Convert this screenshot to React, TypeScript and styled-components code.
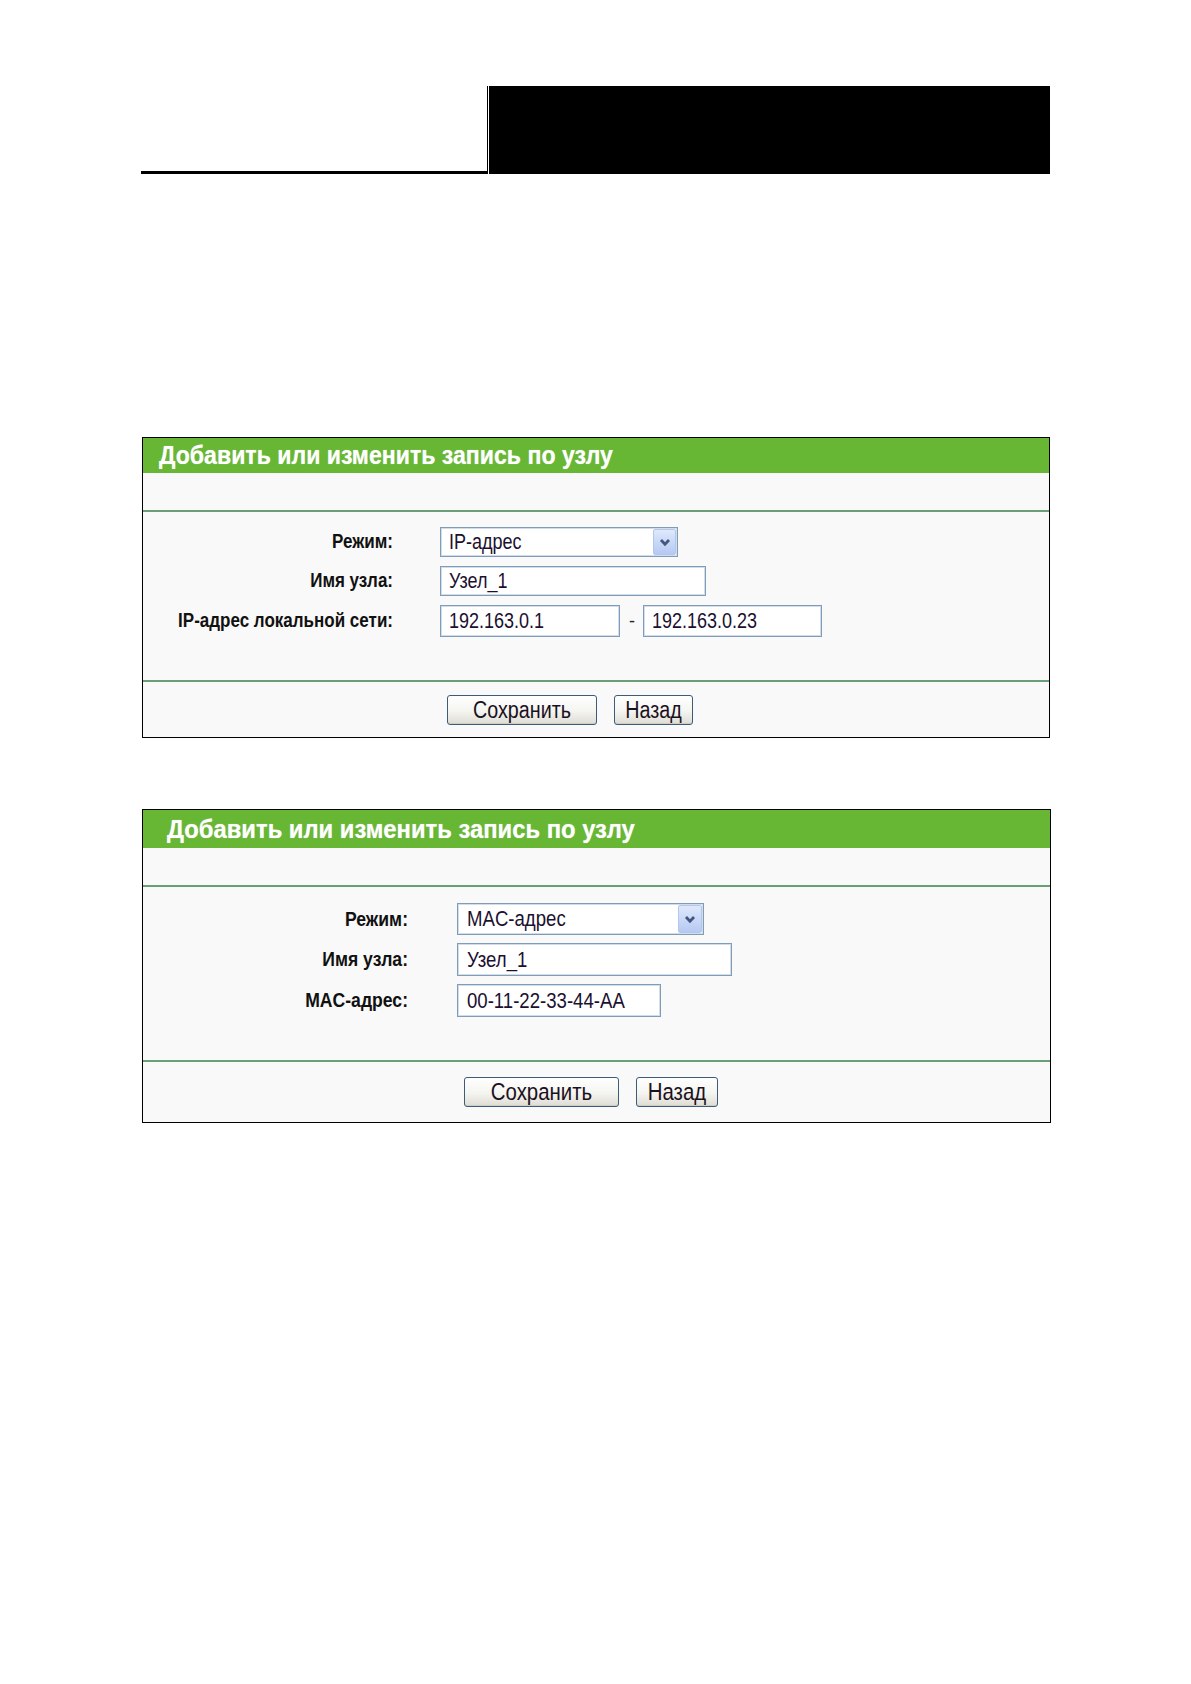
import React from "react";
import styled, { createGlobalStyle } from "styled-components";

const Global = createGlobalStyle`
  html, body { margin: 0; padding: 0; background: #ffffff; }
  body { font-family: "Liberation Sans", Arial, sans-serif; color: #000; }
`;

const Page = styled.div`
  width: 1191px;
  min-height: 1684px;
  box-sizing: border-box;
  padding: 86px 0 0 141px;
  display: flex;
  flex-direction: column;
`;

const Banner = styled.div`
  display: flex;
  width: 909px;
  height: 88px;
`;

const BannerLeft = styled.div`
  width: 346px;
  box-sizing: border-box;
  border-bottom: 3px solid #000;
`;

const BannerRule = styled.div`
  width: 1px;
  margin-right: 1px;
  background: #000;
`;

const BannerBlock = styled.div`
  flex: 1;
  background: #000;
`;

type Dims = {
  width: number;
  top: number;
  headH: number;
  titleSize: number;
  titlePad: number;
  blankH: number;
  formTop: number;
  formBottom: number;
  rowGap: number;
  labelCol: number;
  colGap: number;
  labelSize: number;
  inputSize: number;
  textPad: number;
  btnTop: number;
  btnBottom: number;
  btnLeft: number;
  btnSize: number;
  saveW: number;
  backW: number;
};

const Panel = styled.section<{ $w: number; $top: number }>`
  width: ${(p) => p.$w}px;
  margin: ${(p) => p.$top}px 0 0 1px;
  box-sizing: border-box;
  border: 1px solid #000;
  background: #f9f9f9;
  display: flex;
  flex-direction: column;
`;

const TitleBar = styled.div<{ $h: number; $fs: number; $pad: number }>`
  height: ${(p) => p.$h}px;
  background: #67b634;
  color: #ffffff;
  font-weight: bold;
  font-size: ${(p) => p.$fs}px;
  padding-left: ${(p) => p.$pad}px;
  display: flex;
  align-items: center;
  white-space: nowrap;
  text-shadow: 0 0 1px rgba(255, 255, 255, 0.6);
`;

const Stretch = styled.span<{ $sy: number }>`
  display: inline-block;
  transform: scaleY(${(p) => p.$sy});
  transform-origin: 50% 50%;
`;

const Blank = styled.div<{ $h: number }>`
  height: ${(p) => p.$h}px;
`;

const Divider = styled.div`
  height: 2px;
  background: #6a9e78;
`;

const Form = styled.div<{ $top: number; $bottom: number; $gap: number }>`
  padding: ${(p) => p.$top}px 0 ${(p) => p.$bottom}px 0;
  display: flex;
  flex-direction: column;
  gap: ${(p) => p.$gap}px;
`;

const Row = styled.div<{ $col: number; $gap: number }>`
  display: grid;
  grid-template-columns: ${(p) => p.$col}px auto;
  column-gap: ${(p) => p.$gap}px;
  align-items: center;
`;

const Label = styled.div<{ $fs: number }>`
  text-align: right;
  font-weight: bold;
  font-size: ${(p) => p.$fs}px;
  color: #111;
  white-space: nowrap;
`;

const Fields = styled.div`
  display: flex;
  align-items: center;
`;

const Field = styled.div<{ $w: number; $h: number; $fs: number; $pad: number }>`
  width: ${(p) => p.$w}px;
  height: ${(p) => p.$h}px;
  box-sizing: border-box;
  border: 1px solid #7f9db9;
  box-shadow: inset 0 0 0 1px #d3dde8;
  background: #ffffff;
  font-size: ${(p) => p.$fs}px;
  color: #1c1030;
  padding-left: ${(p) => p.$pad}px;
  display: flex;
  align-items: center;
  white-space: nowrap;
`;

const SelectBox = styled(Field)`
  justify-content: space-between;
  padding-right: 1px;
`;

const ArrowBtn = styled.div<{ $w: number }>`
  width: ${(p) => p.$w}px;
  align-self: stretch;
  margin: 1px 0;
  box-sizing: border-box;
  border: 1px solid #b3c6ec;
  border-radius: 2px;
  background: linear-gradient(#dfe8fc, #b5c9f3);
  display: flex;
  align-items: center;
  justify-content: center;
`;

const Dash = styled.span<{ $fs: number }>`
  font-size: ${(p) => p.$fs}px;
  margin: 0 8px 0 9px;
  color: #222;
`;

const ButtonBar = styled.div<{ $top: number; $bottom: number; $left: number }>`
  padding: ${(p) => p.$top}px 0 ${(p) => p.$bottom}px ${(p) => p.$left}px;
  display: flex;
  gap: 17px;
`;

const Button = styled.button<{ $w: number; $fs: number }>`
  width: ${(p) => p.$w}px;
  height: 30px;
  box-sizing: border-box;
  border: 1px solid #3d5c7a;
  border-radius: 3px;
  background: linear-gradient(#ffffff 0%, #f4f4f0 55%, #dedcd4 100%);
  box-shadow: inset 0 -1px 0 #cfcdc4;
  font-family: "Liberation Sans", Arial, sans-serif;
  font-size: ${(p) => p.$fs}px;
  color: #1b1020;
  padding: 0;
  display: flex;
  align-items: center;
  justify-content: center;
`;

const Chevron = () => (
  <svg width="12" height="9" viewBox="0 0 12 9">
    <path d="M2 2 L6 6.2 L10 2" stroke="#42567e" strokeWidth="2.8" fill="none" />
  </svg>
);

type FieldSpec = { w: number; h: number; text: string };

type RowSpec = {
  label: string;
  select?: FieldSpec & { arrowW: number };
  fields?: FieldSpec[];
};

type PanelSpec = { dims: Dims; rows: RowSpec[] };

const P1: Dims = {
  width: 908,
  top: 263,
  headH: 35,
  titleSize: 23.1,
  titlePad: 16,
  blankH: 37,
  formTop: 15,
  formBottom: 43,
  rowGap: 9,
  labelCol: 250,
  colGap: 47,
  labelSize: 17,
  inputSize: 18,
  textPad: 8,
  btnTop: 13,
  btnBottom: 12,
  btnLeft: 304,
  btnSize: 19.7,
  saveW: 150,
  backW: 79,
};

const P2: Dims = {
  width: 909,
  top: 71,
  headH: 38,
  titleSize: 23.8,
  titlePad: 24,
  blankH: 37,
  formTop: 16,
  formBottom: 43,
  rowGap: 8,
  labelCol: 265,
  colGap: 49,
  labelSize: 17.6,
  inputSize: 18.6,
  textPad: 9,
  btnTop: 15,
  btnBottom: 15,
  btnLeft: 321,
  btnSize: 20.4,
  saveW: 155,
  backW: 82,
};

const panels: PanelSpec[] = [
  {
    dims: P1,
    rows: [
      { label: "Режим:", select: { w: 238, h: 30, text: "IP-адрес", arrowW: 23 } },
      { label: "Имя узла:", fields: [{ w: 266, h: 30, text: "Узел_1" }] },
      {
        label: "IP-адрес локальной сети:",
        fields: [
          { w: 180, h: 32, text: "192.163.0.1" },
          { w: 179, h: 32, text: "192.163.0.23" },
        ],
      },
    ],
  },
  {
    dims: P2,
    rows: [
      { label: "Режим:", select: { w: 247, h: 32, text: "MAC-адрес", arrowW: 24 } },
      { label: "Имя узла:", fields: [{ w: 275, h: 33, text: "Узел_1" }] },
      { label: "MAC-адрес:", fields: [{ w: 204, h: 33, text: "00-11-22-33-44-AA" }] },
    ],
  },
];

const SY = 1.18;

const EntryPanel = ({ dims: d, rows }: PanelSpec) => (
  <Panel $w={d.width} $top={d.top}>
    <TitleBar $h={d.headH} $fs={d.titleSize} $pad={d.titlePad}>
      <Stretch $sy={1.08}>Добавить или изменить запись по узлу</Stretch>
    </TitleBar>
    <Blank $h={d.blankH} />
    <Divider />
    <Form $top={d.formTop} $bottom={d.formBottom} $gap={d.rowGap}>
      {rows.map((r) => (
        <Row key={r.label} $col={d.labelCol} $gap={d.colGap}>
          <Label $fs={d.labelSize}>
            <Stretch $sy={SY}>{r.label}</Stretch>
          </Label>
          <Fields>
            {r.select && (
              <SelectBox $w={r.select.w} $h={r.select.h} $fs={d.inputSize} $pad={d.textPad}>
                <Stretch $sy={SY}>{r.select.text}</Stretch>
                <ArrowBtn $w={r.select.arrowW}>
                  <Chevron />
                </ArrowBtn>
              </SelectBox>
            )}
            {r.fields &&
              r.fields.map((f, i) => (
                <React.Fragment key={f.text}>
                  {i > 0 && <Dash $fs={d.inputSize}>-</Dash>}
                  <Field $w={f.w} $h={f.h} $fs={d.inputSize} $pad={d.textPad}>
                    <Stretch $sy={SY}>{f.text}</Stretch>
                  </Field>
                </React.Fragment>
              ))}
          </Fields>
        </Row>
      ))}
    </Form>
    <Divider />
    <ButtonBar $top={d.btnTop} $bottom={d.btnBottom} $left={d.btnLeft}>
      <Button $w={d.saveW} $fs={d.btnSize}>
        <Stretch $sy={SY}>Сохранить</Stretch>
      </Button>
      <Button $w={d.backW} $fs={d.btnSize}>
        <Stretch $sy={SY}>Назад</Stretch>
      </Button>
    </ButtonBar>
  </Panel>
);

export default function App() {
  return (
    <>
      <Global />
      <Page>
        <Banner>
          <BannerLeft />
          <BannerRule />
          <BannerBlock />
        </Banner>
        {panels.map((p, i) => (
          <EntryPanel key={i} {...p} />
        ))}
      </Page>
    </>
  );
}
